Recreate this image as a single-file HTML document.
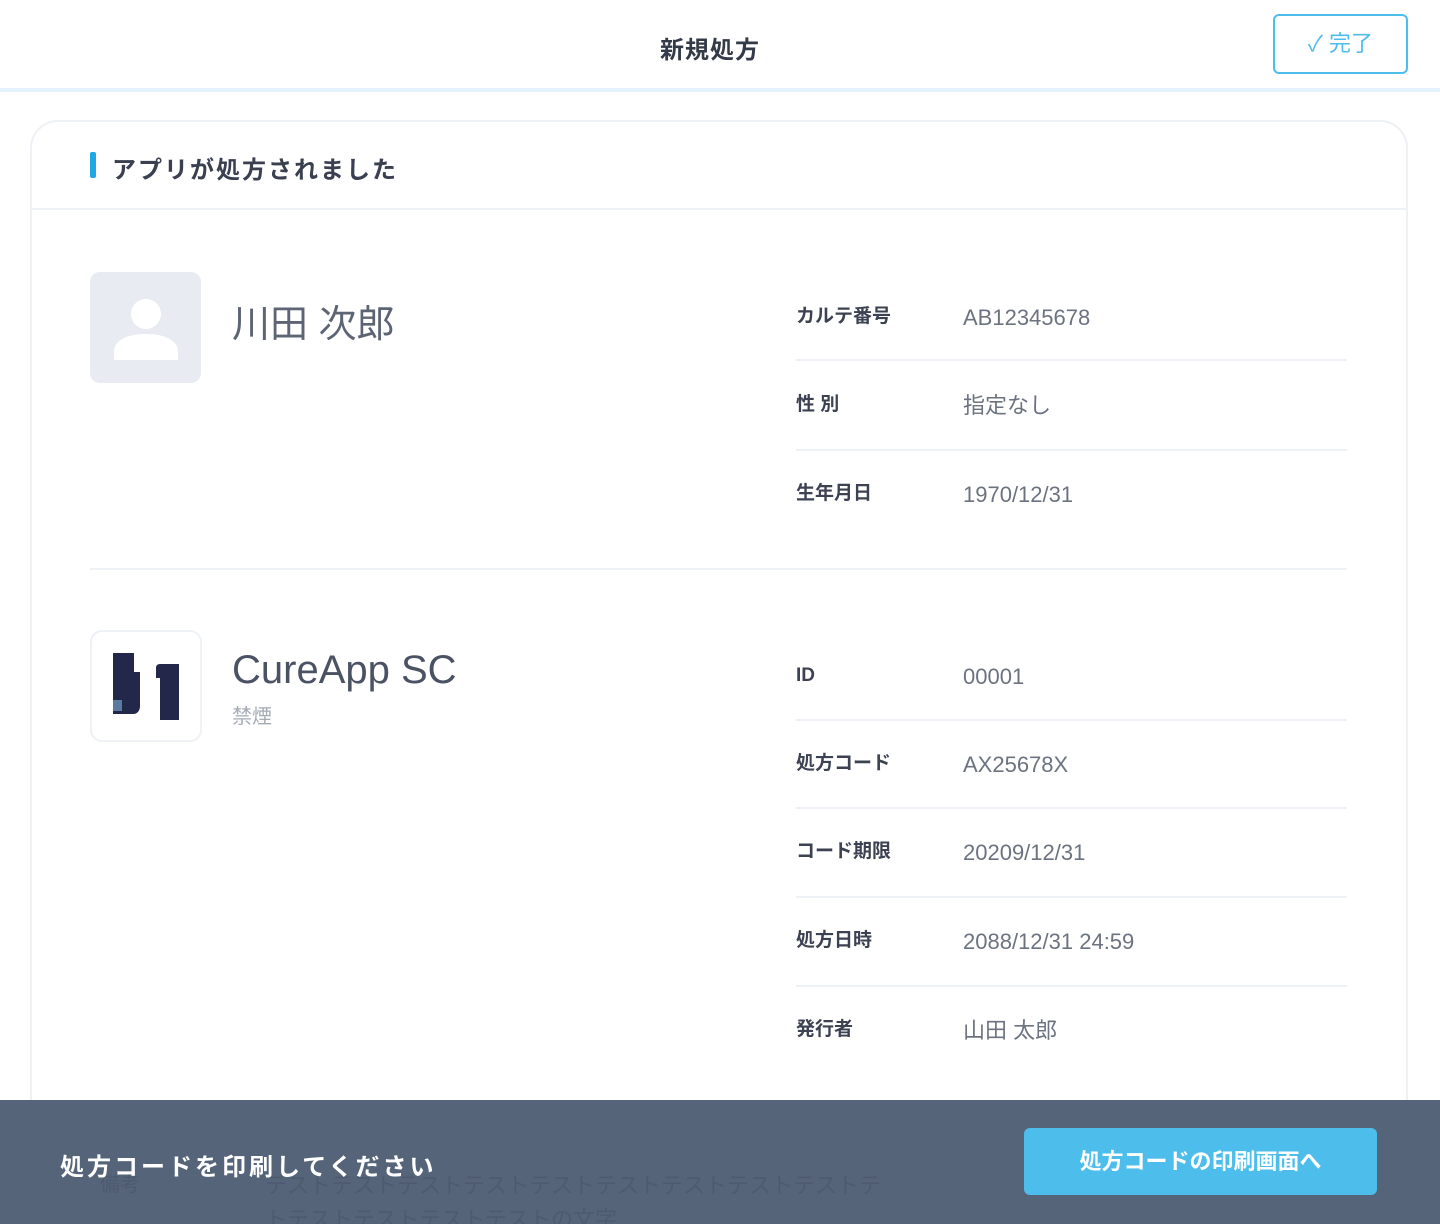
<!DOCTYPE html>
<html style="overflow:hidden;width:1440px;height:1224px"><head><meta charset="utf-8"><style>
*{margin:0;padding:0;box-sizing:border-box}
body{width:1440px;height:1224px;overflow:hidden;background:#fff;font-family:"Liberation Sans","Noto Sans CJK JP",sans-serif;position:relative}
.a{position:absolute;white-space:nowrap}
.hdr{position:absolute;left:0;top:0;width:1440px;height:92px;border-bottom:4px solid #e3f2fb}
.card{position:absolute;left:30px;top:120px;width:1378px;height:1040px;border:2px solid #eef1f6;border-radius:28px}
.ln{position:absolute;height:2px;background:#eef1f5}
.lb{position:absolute;left:796px;font-size:19px;font-weight:bold;color:#3c4252;line-height:24px}
.v{position:absolute;left:963px;font-size:22px;color:#6c7380;line-height:26px}
</style></head><body>
<div class="hdr"></div>
<div class="a" style="left:660px;top:30px;font-size:24px;font-weight:bold;color:#333a48;letter-spacing:1px">新規処方</div>
<div class="a" style="left:1273px;top:14px;width:135px;height:60px;border:2px solid #4dbdeb;border-radius:6px;color:#4dbdeb;font-size:22px;line-height:56px;text-align:center">✓ 完了</div>
<div class="card"></div>
<div class="a" style="left:90px;top:152px;width:6px;height:26px;background:#1ea8e6;border-radius:2px"></div>
<div class="a" style="left:112px;top:150px;font-size:24px;font-weight:bold;color:#3a4050;letter-spacing:2px">アプリが処方されました</div>
<div class="ln" style="left:32px;top:208px;width:1374px"></div>

<div class="a" style="left:90px;top:272px;width:111px;height:111px;background:#e8ecf2;border-radius:10px"></div>
<svg class="a" style="left:110px;top:292px" width="72" height="72" viewBox="0 0 72 72"><circle cx="36" cy="22" r="15" fill="#fff"/><path d="M4 68v-8c0-12 14-18 32-18s32 6 32 18v8z" fill="#fff"/></svg>
<div class="a" style="left:232px;top:302px;font-size:38px;color:#5d6575;line-height:46px">川田 次郎</div>

<div class="lb" style="top:305px">カルテ番号</div><div class="v" style="top:305px">AB12345678</div>
<div class="ln" style="left:796px;top:359px;width:551px"></div>
<div class="lb" style="top:393px">性 別</div><div class="v" style="top:393px">指定なし</div>
<div class="ln" style="left:796px;top:449px;width:551px"></div>
<div class="lb" style="top:482px">生年月日</div><div class="v" style="top:482px">1970/12/31</div>
<div class="ln" style="left:90px;top:568px;width:1257px"></div>

<div class="a" style="left:90px;top:630px;width:112px;height:112px;border:2px solid #eef1f6;border-radius:12px;background:#fff"></div>
<svg class="a" style="left:110px;top:652px" width="72" height="70" viewBox="0 0 72 70"><path d="M3 1h21v19h6v34c0 4-2 8-7 8H3z" fill="#23284a"/><rect x="3" y="48" width="9" height="11" fill="#5a7aa0"/><path d="M50 12h19v56H50V26h-4v-10c0-2 1-4 4-4z" fill="#23284a"/></svg>
<div class="a" style="left:232px;top:646px;font-size:40px;color:#4a5264;line-height:48px">CureApp SC</div>
<div class="a" style="left:232px;top:700px;font-size:20px;color:#a4abb6">禁煙</div>

<div class="lb" style="top:664px">ID</div><div class="v" style="top:664px">00001</div>
<div class="ln" style="left:796px;top:719px;width:551px"></div>
<div class="lb" style="top:752px">処方コード</div><div class="v" style="top:752px">AX25678X</div>
<div class="ln" style="left:796px;top:807px;width:551px"></div>
<div class="lb" style="top:840px">コード期限</div><div class="v" style="top:840px">20209/12/31</div>
<div class="ln" style="left:796px;top:896px;width:551px"></div>
<div class="lb" style="top:929px">処方日時</div><div class="v" style="top:929px">2088/12/31 24:59</div>
<div class="ln" style="left:796px;top:985px;width:551px"></div>
<div class="lb" style="top:1018px">発行者</div><div class="v" style="top:1018px">山田 太郎</div>

<div class="a" style="left:0;top:1100px;width:1440px;height:124px;background:#56647a;overflow:hidden">
<div class="a" style="left:100px;top:68px;font-size:20px;color:#4d5a6f">備考</div>
<div class="a" style="left:265px;top:68px;font-size:22px;color:#4d5a6f">テストテストテストテストテストテストテストテストテストテ</div>
<div class="a" style="left:265px;top:102px;font-size:22px;color:#4d5a6f">トテストテストテストテストの文字</div>
<div class="a" style="left:60px;top:47px;font-size:24px;font-weight:bold;color:#fff;letter-spacing:3px">処方コードを印刷してください</div>
<div class="a" style="left:1024px;top:28px;width:353px;height:67px;background:#4dbdeb;border-radius:6px;color:#fff;font-size:22px;font-weight:bold;line-height:67px;text-align:center">処方コードの印刷画面へ</div>
</div>
</body></html>
